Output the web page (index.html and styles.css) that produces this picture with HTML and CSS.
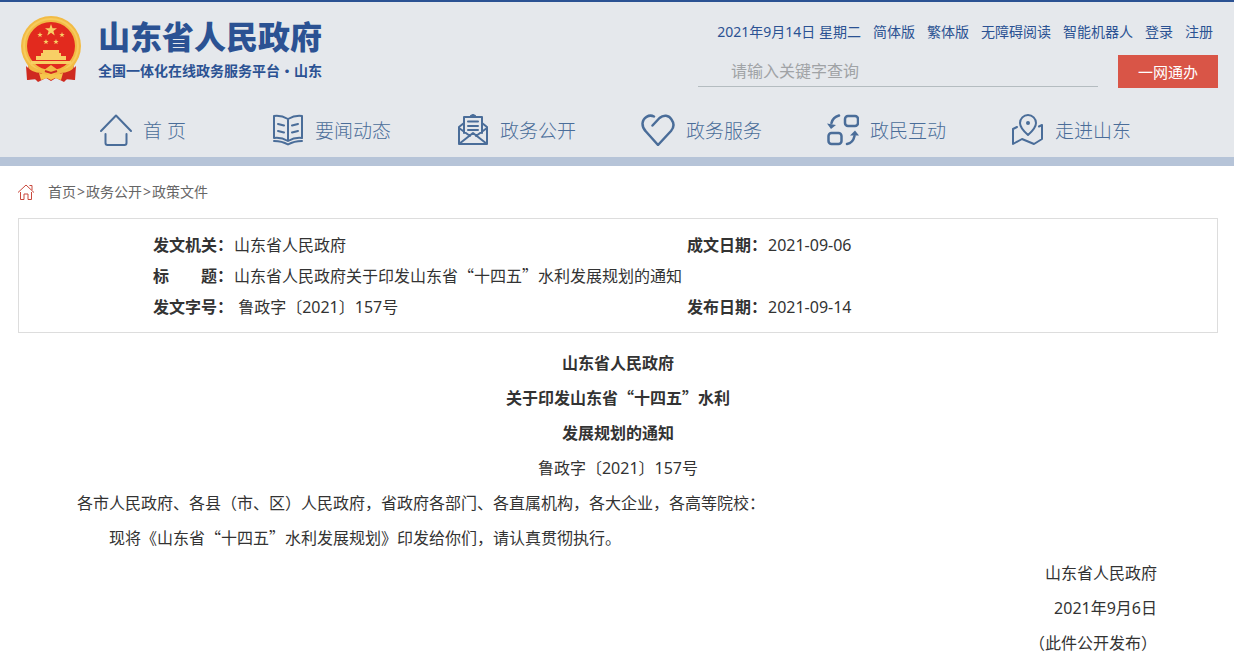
FILE: index.html
```
<!DOCTYPE html>
<html lang="zh-CN">

<head>
  <meta charset="UTF-8">
  <meta name="viewport" content="width=device-width, initial-scale=1.0">
  <title>山东省人民政府 政策文件</title>
  <link rel="stylesheet" href="styles.css">
</head>

<body>
  <header class="site-header">
    <div class="header-top">
      <a class="brand" href="#">
        <svg class="emblem" viewBox="0 0 62 68" aria-hidden="true">
          <path d="M9 46L7 65l7-2 4 4 8-4 5 3 5-3 8 4 4-4 7 2-2-19z" fill="#cf2a20" />
          <circle cx="31" cy="31" r="30" fill="#f2bb45" />
          <circle cx="31" cy="31" r="27" fill="none" stroke="#f7cb5c" stroke-width="2" />
          <circle cx="31" cy="31" r="24" fill="#e22a1e" />
          <path d="M31 9l1.500 4.200h4.500l-3.600 2.800 1.300 4.400L31 17.800l-3.700 2.600 1.300-4.400-3.600-2.800h4.500z" fill="#f8cf65" />
          <path id="star" d="M20 17l.7 1.900h2l-1.600 1.300.6 2-1.700-1.200-1.700 1.200.6-2-1.600-1.300h2z" fill="#f8cf65" />
          <use href="#star" x="22" />
          <use href="#star" x="6" y="7" />
          <use href="#star" x="16" y="7" />
          <path d="M23 35h16v3h2v3h5v4H16v-4h5v-3h2zM11 46h40v3H11z" fill="#f8cf65" />
          <path d="M7 48q8 7 17 7l7-5 7 5q9 0 17-7l-3 8-12 5-9-4-9 4-12-5z" fill="#f2bb45" />
          <path d="M6 51q6 7 15 7l4 3-7 3-11 1zM56 51q-6 7-15 7l-4 3 7 3 11 1z" fill="#cf2a20" />
          <path d="M19 58l8 2 4-2 4 2 8-2-2 7-6-2-4 2-4-2-6 2z" fill="#f6c64c" />
          <path d="M25 56l6 2 6-2" fill="none" stroke="#cf2a20" stroke-width="2" />
        </svg>
        <span class="brand-text">
          <strong class="brand-name">山东省人民政府</strong>
          <span class="brand-slogan">全国一体化在线政务服务平台·山东</span>
        </span>
      </a>

      <div class="header-tools">
        <div class="top-links">
          <span>2021年9月14日 星期二</span>
          <a href="#">简体版</a>
          <a href="#">繁体版</a>
          <a href="#">无障碍阅读</a>
          <a href="#">智能机器人</a>
          <a href="#">登录</a>
          <a href="#">注册</a>
        </div>
        <form class="search">
          <input type="text" name="keyword" placeholder="请输入关键字查询" aria-label="请输入关键字查询">
          <button type="button">一网通办</button>
        </form>
      </div>
    </div>

    <nav class="main-nav">
      <a href="#">
        <svg viewBox="0 0 32 32" aria-hidden="true">
          <path d="M1 17L16 1.500 31 17M5.500 20v9q0 2 2 2h17q2 0 2-2v-9" />
        </svg>
        首 页
      </a>
      <a href="#">
        <svg viewBox="0 0 32 32" aria-hidden="true">
          <path d="M16 5Q9 1 2 2v22q7-1 14 3 7-4 14-3V2q-7-1-14 3zM16 5v22M6 10l6 1.500M6 17l6 1.500M26 10l-6 1.500M26 17l-6 1.500M2 27q8 0 14 3.500Q22 27 30 27" />
        </svg>
        要闻动态
      </a>
      <a href="#">
        <svg viewBox="0 0 32 32" aria-hidden="true">
          <path d="M7 19V3h18v16M7 9l-5 4v17h28V13l-5-4M2 14l11 8M30 14l-11 8M2 30l14-11 14 11M11 7.500h10M11 12h10M11 16h10M14 2l2-1 2 1" />
        </svg>
        政务公开
      </a>
      <a href="#">
        <svg class="heart" viewBox="0 0 34 32" aria-hidden="true">
          <path d="M13 2.500C8 0 2 3.500 1.500 9.500c0 3 1 5.500 3 7.500L17 31l13-14c3-3.500 3-8 .500-11.500C28 1 22.500.5 18.500 4L11.500 11.500" />
        </svg>
        政务服务
      </a>
      <a href="#">
        <svg viewBox="0 0 32 32" aria-hidden="true">
          <g class="bold">
            <rect x="18" y="2" width="13" height="10" rx="3" />
            <rect x="1.500" y="19" width="13" height="11" rx="3" />
            <path d="M12 1.500Q6 3 4.500 9M20 30q6-1 7.500-8" />
          </g>
          <path class="solid" d="M0 9.500l9 1.500-5 4zM23 21.500l5-5 4 5z" />
        </svg>
        政民互动
      </a>
      <a href="#">
        <svg viewBox="0 0 32 32" aria-hidden="true">
          <path d="M16 21Q8 14 8 9a8 8 0 0 1 16 0q0 5-8 12zM5 13l-4 2v15l9-5 12 5 8-5V11l-3 1.500" />
          <circle class="solid" cx="16" cy="9" r="2" />
        </svg>
        走进山东
      </a>
    </nav>
  </header>

  <main>
    <nav class="breadcrumb">
      <svg viewBox="0 0 16 16" aria-hidden="true">
        <path d="M0 8.500L8 1l8 7.500M2.500 8v7.500H6V10h4v5.500h3.500V8M11.500 1.500H14V6" />
      </svg>
      <div><a href="#">首页</a><span>&gt;</span><a href="#">政务公开</a><span>&gt;</span><a href="#">政策文件</a></div>
    </nav>

    <div class="doc-info">
      <table>
        <tr>
          <th scope="row">发文机关：</th>
          <td class="wide">山东省人民政府</td>
          <th scope="row">成文日期：</th>
          <td>2021-09-06</td>
        </tr>
        <tr>
          <th scope="row">标　　题：</th>
          <td colspan="3">山东省人民政府关于印发山东省<span class="quoted">“十四五”</span>水利发展规划的通知</td>
        </tr>
        <tr>
          <th scope="row">发文字号：</th>
          <td class="wide">&nbsp;鲁政字〔2021〕157号</td>
          <th scope="row">发布日期：</th>
          <td>2021-09-14</td>
        </tr>
      </table>
    </div>

    <article>
      <h1>
        山东省人民政府<br>
        关于印发山东省<span class="quoted">“十四五”</span>水利<br>
        发展规划的通知
      </h1>
      <p class="doc-number">鲁政字〔2021〕157号</p>
      <p>各市人民政府、各县（市、区）人民政府，省政府各部门、各直属机构，各大企业，各高等院校：</p>
      <p class="body-text">现将《山东省<span class="quoted">“十四五”</span>水利发展规划》印发给你们，请认真贯彻执行。</p>
      <footer>
        <p>山东省人民政府</p>
        <p>2021年9月6日</p>
        <p>（此件公开发布）</p>
      </footer>
    </article>
  </main>
</body>

</html>
```
FILE: styles.css
```
:root {
  --blue: #2b5293;
  --nav-blue: #4a6d99;
  --header-bg: #e5e8ec;
  --band: #b6c4d8;
  --red: #d95547;
  --text: #333;
  --cjk: "Noto Sans CJK SC", sans-serif;
}

* {
  box-sizing: border-box;
}

body {
  margin: 0;
  font-family: "Noto Sans", var(--cjk);
  font-size: 16px;
  color: var(--text);
  background: #fff;
}

a {
  color: inherit;
  text-decoration: none;
}

a:hover {
  text-decoration: underline;
}

.site-header {
  background: var(--header-bg);
  border-top: 2px solid var(--blue);
  border-bottom: 9px solid var(--band);
}

.header-top {
  display: flex;
  justify-content: space-between;
  padding: 13px 16px 0 20px;
}

.brand {
  display: flex;
  gap: 16px;
  color: var(--blue);
}

.emblem {
  width: 62px;
  height: 68px;
}

.brand-text {
  display: flex;
  flex-direction: column;
  gap: 4px;
  font-family: var(--cjk);
  font-weight: 700;
}

.brand-name {
  font-size: 32px;
  line-height: 41px;
}

.brand-slogan {
  font-size: 14px;
  line-height: 20px;
}

.header-tools {
  width: 520px;
  padding-top: 5px;
}

.top-links {
  display: flex;
  justify-content: flex-end;
  gap: 12px;
  padding-right: 5px;
  font-size: 14px;
  line-height: 24px;
  color: var(--blue);
  white-space: nowrap;
}

.search {
  display: flex;
  gap: 20px;
  margin-top: 11px;
}

.search input {
  flex: 1;
  min-width: 0;
  height: 32px;
  padding: 0 0 0 33px;
  border: none;
  border-bottom: 1px solid #b4bcc0;
  background: transparent;
  font: inherit;
}

.search input::placeholder {
  color: #a0a3a6;
}

.search button {
  width: 100px;
  height: 33px;
  padding: 0;
  border: none;
  background: var(--red);
  color: #fff;
  font: inherit;
  font-size: 15px;
  cursor: pointer;
}

.main-nav {
  display: grid;
  grid-template-columns: repeat(6, 1fr);
  margin-top: 16px;
  padding: 0 70px 1px 54px;
}

.main-nav a {
  display: flex;
  align-items: center;
  justify-content: center;
  gap: 11px;
  height: 52px;
  font-size: 19px;
  font-weight: 300;
  color: var(--nav-blue);
  white-space: nowrap;
}

.main-nav a:first-child {
  padding-right: 7px;
}

.main-nav svg {
  width: 32px;
  height: 32px;
  fill: none;
  stroke: currentColor;
  stroke-width: 2;
  stroke-linecap: round;
  stroke-linejoin: round;
}

.main-nav .heart {
  width: 34px;
  stroke-width: 2.5;
}

.main-nav .bold {
  stroke-width: 2.5;
}

.main-nav .solid {
  fill: currentColor;
  stroke: none;
}

main {
  padding: 0 16px 0 18px;
}

.breadcrumb {
  display: flex;
  align-items: center;
  gap: 14px;
  height: 52px;
  font-size: 14px;
  line-height: 20px;
  color: #666;
}

.breadcrumb span {
  padding: 0 1px;
}

.breadcrumb svg {
  width: 16px;
  height: 16px;
  fill: none;
  stroke: #c9483c;
}

.doc-info {
  padding: 11px 0 9px 134px;
  border: 1px solid #ddd;
}

.doc-info table {
  width: 100%;
  border-collapse: collapse;
}

.doc-info th,
.doc-info td {
  padding: 0;
  line-height: 31px;
  text-align: left;
}

.doc-info th {
  width: 81px;
  white-space: nowrap;
}

.doc-info .wide {
  width: 453px;
}

/* full-width quotes, kept from growing the line */
.quoted {
  font-family: var(--cjk);
  line-height: 1;
}

article {
  padding: 13px 27px 0;
  line-height: 35px;
}

article h1 {
  margin: 0;
  font-size: 16px;
  text-align: center;
}

article p {
  margin: 0;
  text-indent: 2em;
}

article .doc-number {
  text-align: center;
  text-indent: 0;
}

article .body-text {
  text-indent: 4em;
}

article footer {
  padding-right: 34px;
  text-align: right;
}

article footer p {
  text-indent: 0;
}
```
